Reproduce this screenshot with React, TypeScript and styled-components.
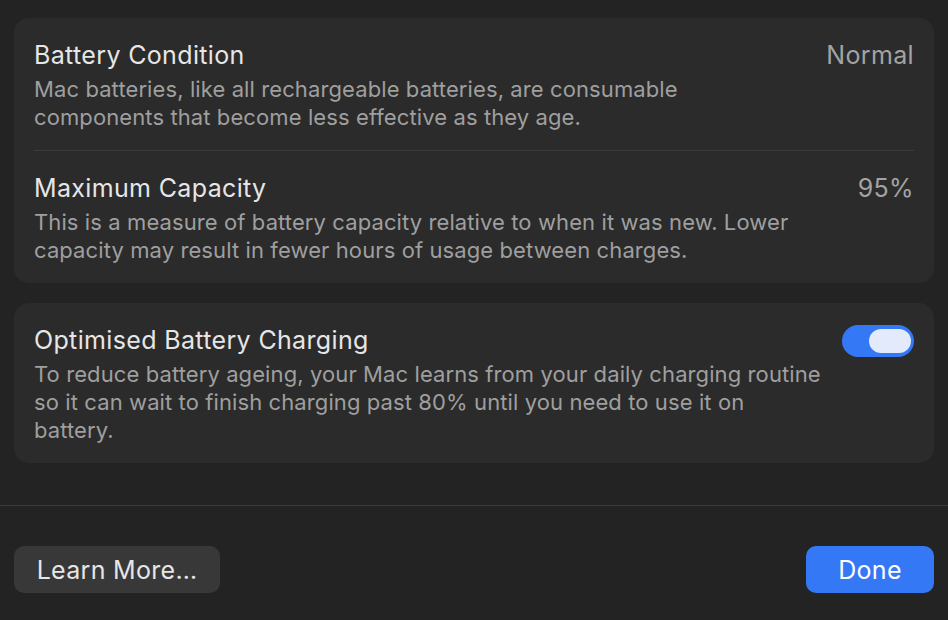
import React from "react";
import styled, { createGlobalStyle } from "styled-components";

const Global = createGlobalStyle`
  html, body { margin: 0; padding: 0; background: #232323; }
  body { font-family: Inter, "Noto Sans", "Liberation Sans", sans-serif; -webkit-font-smoothing: antialiased; }
`;

const Page = styled.div`
  width: 948px;
  height: 620px;
  background: #232323;
  display: flex;
  flex-direction: column;
  box-sizing: border-box;
  overflow: hidden;
`;

const Content = styled.div`
  display: flex;
  flex-direction: column;
  gap: 20px;
  padding: 18px 14px 0;
  height: 505px;
  box-sizing: border-box;
`;

const Card = styled.section`
  background: #2b2b2b;
  border-radius: 15px;
  padding: 0 20px;
  display: flex;
  flex-direction: column;
`;

const Row = styled.div<{ $divider?: boolean }>`
  display: flex;
  justify-content: space-between;
  align-items: flex-start;
  gap: 20px;
  padding: 22px 0 19px;
  border-top: ${(p) => (p.$divider ? "1px solid #3b3b3b" : "none")};
`;

const Text = styled.div`
  display: flex;
  flex-direction: column;
  gap: 5px;
`;

const Title = styled.div`
  font-size: 25px;
  line-height: 30px;
  letter-spacing: 0.35px;
  color: #e6e6e6;
  white-space: nowrap;
`;

const Desc = styled.div`
  font-size: 22px;
  line-height: 28px;
  letter-spacing: 0.1px;
  color: #9f9f9f;
  white-space: nowrap;
`;

const Value = styled.div`
  font-size: 25px;
  line-height: 30px;
  letter-spacing: 0.35px;
  color: #a3a3a3;
  white-space: nowrap;
`;

const Toggle = styled.div<{ $on: boolean }>`
  width: 72px;
  height: 32px;
  border-radius: 16px;
  background: ${(p) => (p.$on ? "#3478f6" : "#555")};
  box-sizing: border-box;
  padding: 4px 3px;
  display: flex;
  justify-content: ${(p) => (p.$on ? "flex-end" : "flex-start")};
  flex-shrink: 0;
`;

const Knob = styled.div`
  width: 42px;
  height: 24px;
  border-radius: 12px;
  background: #e2eafc;
`;

const Footer = styled.footer`
  border-top: 1px solid #3a3a3a;
  padding: 40px 14px 0;
  display: flex;
  justify-content: space-between;
`;

const Button = styled.button<{ $primary?: boolean }>`
  height: 47px;
  border: none;
  border-radius: 10px;
  padding: 0;
  width: ${(p) => (p.$primary ? "128px" : "206px")};
  background: ${(p) => (p.$primary ? "#3478f6" : "#383838")};
  color: ${(p) => (p.$primary ? "#ffffff" : "#e6e6e6")};
  font-family: Inter, "Noto Sans", "Liberation Sans", sans-serif;
  font-size: 25px;
  font-weight: 400;
  letter-spacing: 0.3px;
  cursor: pointer;
`;

export default function App() {
  return (
    <Page>
      <Global />
      <Content>
        <Card>
          <Row>
            <Text>
              <Title>Battery Condition</Title>
              <Desc>
                Mac batteries, like all rechargeable batteries, are consumable
                <br />
                components that become less effective as they age.
              </Desc>
            </Text>
            <Value>Normal</Value>
          </Row>
          <Row $divider>
            <Text>
              <Title>Maximum Capacity</Title>
              <Desc>
                This is a measure of battery capacity relative to when it was new. Lower
                <br />
                capacity may result in fewer hours of usage between charges.
              </Desc>
            </Text>
            <Value>95%</Value>
          </Row>
        </Card>
        <Card>
          <Row>
            <Text>
              <Title>Optimised Battery Charging</Title>
              <Desc>
                To reduce battery ageing, your Mac learns from your daily charging routine
                <br />
                so it can wait to finish charging past 80% until you need to use it on
                <br />
                battery.
              </Desc>
            </Text>
            <Toggle $on>
              <Knob />
            </Toggle>
          </Row>
        </Card>
      </Content>
      <Footer>
        <Button>Learn More…</Button>
        <Button $primary>Done</Button>
      </Footer>
    </Page>
  );
}
